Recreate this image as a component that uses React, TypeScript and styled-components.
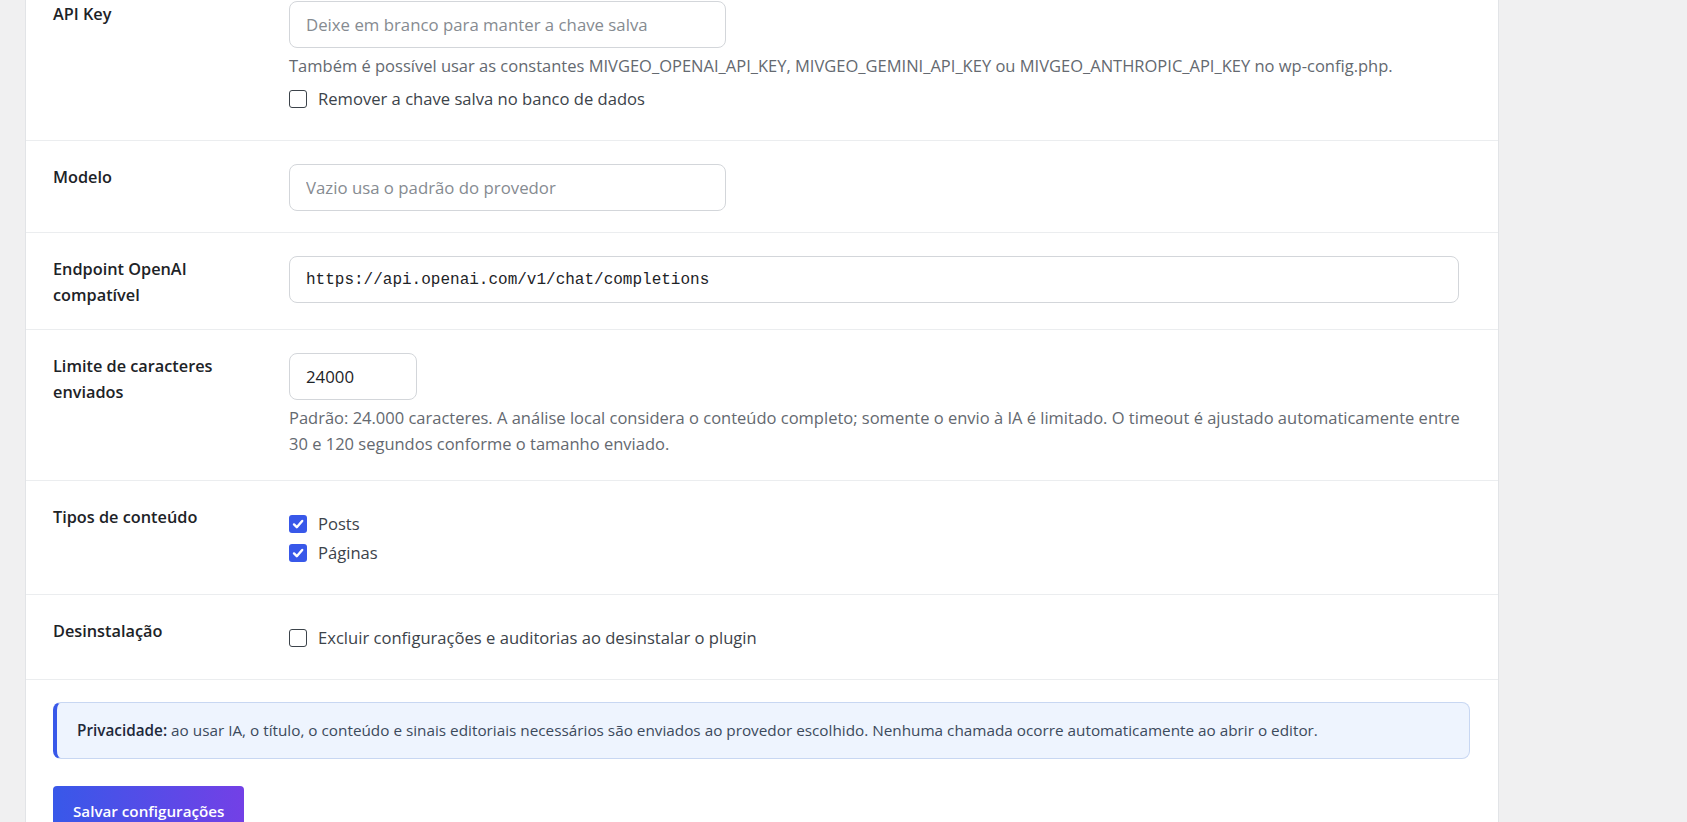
import styled, { createGlobalStyle } from "styled-components";

const sans = '"Open Sans", "Noto Sans", "Liberation Sans", Arial, sans-serif';

const GlobalStyle = createGlobalStyle`
  html, body {
    margin: 0;
    overflow: hidden;
    background: #f0f0f1;
    font-family: ${sans};
    color: #1d2327;
  }
`;

const Page = styled.div`
  height: 822px;
  padding-left: 25px;
  overflow: hidden;
`;

const Card = styled.div`
  width: 1474px;
  box-sizing: border-box;
  margin-top: -23px;
  background: #fff;
  border: 1px solid #e2e4e7;
`;

const Row = styled.div`
  display: grid;
  grid-template-columns: 236px 1fr;
  padding: 23px 39px 21px 27px;
  border-bottom: 1px solid #ebedef;
`;

const Label = styled.div`
  font-size: 16.3px;
  font-weight: 600;
  line-height: 26px;
  color: #1d2327;
  padding-right: 40px;
`;

const Field = styled.div`
  display: flex;
  flex-direction: column;
  align-items: flex-start;
`;

const TextInput = styled.input<{ $width?: string; $mono?: boolean }>`
  box-sizing: border-box;
  width: ${(p) => p.$width ?? "100%"};
  height: 47px;
  padding: 0 16px;
  border: 1px solid #d3d6da;
  border-radius: 8px;
  background: #fff;
  font-family: ${(p) => (p.$mono ? '"Liberation Mono", monospace' : sans)};
  font-size: ${(p) => (p.$mono ? "16px" : "16.8px")};
  color: #1d2327;
  outline: none;

  &::placeholder {
    color: #868b91;
  }
`;

const Help = styled.p`
  margin: 5px -12px 2px 0;
  font-size: 16.5px;
  line-height: 26px;
  color: #646970;
`;

const CheckGroup = styled.div<{ $top?: number }>`
  display: flex;
  flex-direction: column;
  gap: 3px;
  padding: ${(p) => p.$top ?? 7}px 0 7px;
`;

const CheckItem = styled.label`
  display: flex;
  align-items: center;
  gap: 11px;
  font-size: 16.6px;
  line-height: 26px;
  color: #3c434a;
`;

const Box = styled.span<{ $on: boolean }>`
  box-sizing: border-box;
  width: 18px;
  height: 18px;
  border-radius: 3px;
  display: inline-flex;
  align-items: center;
  justify-content: center;
  background: ${(p) => (p.$on ? "#3858e9" : "#fff")};
  border: ${(p) => (p.$on ? "none" : "1.5px solid #3c434a")};
`;

const Footer = styled.div`
  padding: 22px 28px 40px 27px;
`;

const Notice = styled.div`
  background: #eef4fe;
  border: 1px solid #c8d7f2;
  border-left: 4px solid #3858e9;
  border-radius: 8px;
  padding: 17px 20px;
  font-size: 15.3px;
  line-height: 21px;
  color: #3c4a5c;

  strong {
    font-weight: 600;
    color: #1e293b;
  }
`;

const SaveButton = styled.button`
  margin-top: 27px;
  padding: 15px 20px;
  border: none;
  border-radius: 4px;
  background: linear-gradient(90deg, #3858e9, #7340e6);
  color: #fff;
  font-family: ${sans};
  font-size: 15.2px;
  font-weight: 600;
  line-height: 20px;
  cursor: pointer;
`;

const Check = ({ on, children }: { on: boolean; children: string }) => (
  <CheckItem>
    <Box $on={on}>
      {on && (
        <svg width="14" height="14" viewBox="0 0 14 14">
          <path d="M3 7.4l2.8 2.8L11.2 4" fill="none" stroke="#fff" strokeWidth="2.4" strokeLinecap="round" strokeLinejoin="round" />
        </svg>
      )}
    </Box>
    {children}
  </CheckItem>
);

export default function App() {
  return (
    <>
      <GlobalStyle />
      <Page>
        <Card>
          <Row>
            <Label>API Key</Label>
            <Field>
              <TextInput $width="437px" placeholder="Deixe em branco para manter a chave salva" />
              <Help>
                Também é possível usar as constantes MIVGEO_OPENAI_API_KEY, MIVGEO_GEMINI_API_KEY ou MIVGEO_ANTHROPIC_API_KEY no wp-config.php.
              </Help>
              <CheckGroup $top={5}>
                <Check on={false}>Remover a chave salva no banco de dados</Check>
              </CheckGroup>
            </Field>
          </Row>
          <Row>
            <Label>Modelo</Label>
            <Field>
              <TextInput $width="437px" placeholder="Vazio usa o padrão do provedor" />
            </Field>
          </Row>
          <Row>
            <Label>Endpoint OpenAI compatível</Label>
            <Field>
              <TextInput $mono defaultValue="https://api.openai.com/v1/chat/completions" />
            </Field>
          </Row>
          <Row>
            <Label>Limite de caracteres enviados</Label>
            <Field>
              <TextInput $width="128px" defaultValue="24000" />
              <Help>
                Padrão: 24.000 caracteres. A análise local considera o conteúdo completo; somente o envio à IA é limitado. O timeout é ajustado automaticamente entre 30 e 120 segundos conforme o tamanho enviado.
              </Help>
            </Field>
          </Row>
          <Row>
            <Label>Tipos de conteúdo</Label>
            <Field>
              <CheckGroup>
                <Check on>Posts</Check>
                <Check on>Páginas</Check>
              </CheckGroup>
            </Field>
          </Row>
          <Row>
            <Label>Desinstalação</Label>
            <Field>
              <CheckGroup>
                <Check on={false}>Excluir configurações e auditorias ao desinstalar o plugin</Check>
              </CheckGroup>
            </Field>
          </Row>
          <Footer>
            <Notice>
              <strong>Privacidade:</strong> ao usar IA, o título, o conteúdo e sinais editoriais necessários são enviados ao provedor escolhido. Nenhuma chamada ocorre automaticamente ao abrir o editor.
            </Notice>
            <SaveButton>Salvar configurações</SaveButton>
          </Footer>
        </Card>
      </Page>
    </>
  );
}
